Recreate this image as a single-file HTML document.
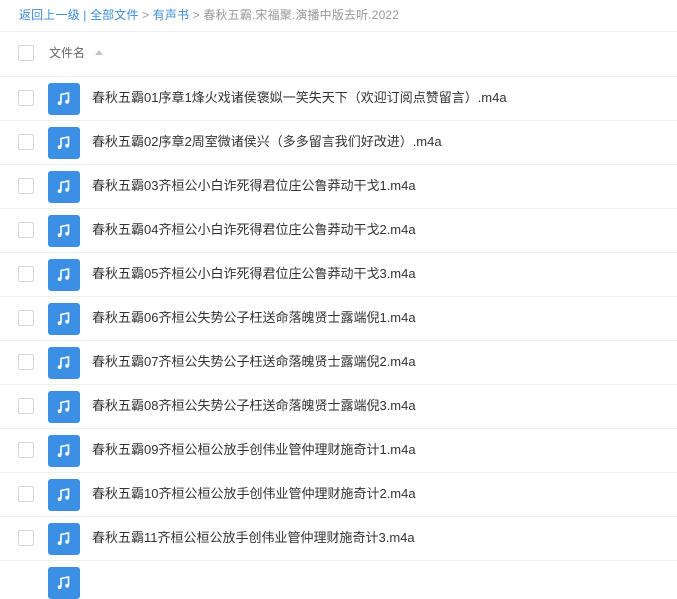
<!DOCTYPE html><html><head><meta charset="utf-8"><style>
body{margin:0;width:677px;height:578px;overflow:hidden;background:#fff;font-family:"Liberation Sans","Noto Sans CJK SC",sans-serif;}
.bc{position:absolute;left:19px;top:6px;font-size:12px;letter-spacing:0.15px;color:#999;line-height:18px;white-space:nowrap}
.bc a{color:#3b8cd6}
.hl{position:absolute;left:0;width:677px;height:1px;background:#eef0f4}
.cb{position:absolute;left:18px;width:14px;height:14px;border:1px solid #d6d6d6;border-radius:2px;background:#fff}
.ic{position:absolute;left:48px;width:32px;height:32px;background:#3b8fe5;border-radius:3px}
.ic svg{position:absolute;left:8px;top:8px}
.t{position:absolute;left:92px;font-size:13px;color:#333;line-height:18px;white-space:nowrap}
</style></head><body>
<div class="bc"><a>返回上一级</a> <span style="color:#3b8cd6">|</span> <a>全部文件</a> &gt; <a>有声书</a> &gt; 春秋五霸.宋福聚.演播中版去听.2022</div>
<div class="hl" style="top:31px"></div>
<div class="cb" style="top:45px"></div>
<div style="position:absolute;left:49px;top:45px;font-size:12px;color:#666;line-height:16px">文件名</div>
<div style="position:absolute;left:95px;top:50px;width:0;height:0;border-left:4px solid transparent;border-right:4px solid transparent;border-bottom:5px solid #c0c4cc"></div>
<div class="hl" style="top:76px"></div>
<div id="rows"></div>
<script>
var n=["春秋五霸01序章1烽火戏诸侯褒姒一笑失天下（欢迎订阅点赞留言）.m4a","春秋五霸02序章2周室微诸侯兴（多多留言我们好改进）.m4a","春秋五霸03齐桓公小白诈死得君位庄公鲁莽动干戈1.m4a","春秋五霸04齐桓公小白诈死得君位庄公鲁莽动干戈2.m4a","春秋五霸05齐桓公小白诈死得君位庄公鲁莽动干戈3.m4a","春秋五霸06齐桓公失势公子枉送命落魄贤士露端倪1.m4a","春秋五霸07齐桓公失势公子枉送命落魄贤士露端倪2.m4a","春秋五霸08齐桓公失势公子枉送命落魄贤士露端倪3.m4a","春秋五霸09齐桓公桓公放手创伟业管仲理财施奇计1.m4a","春秋五霸10齐桓公桓公放手创伟业管仲理财施奇计2.m4a","春秋五霸11齐桓公桓公放手创伟业管仲理财施奇计3.m4a",""];
var h="",svg='<svg width="16" height="16" viewBox="0 0 16 16"><path d="M5 12V3.5L12.5 2V10.5" stroke="#fff" stroke-width="1.6" fill="none"/><circle cx="3.6" cy="12.2" r="1.9" fill="#fff"/><circle cx="11.1" cy="10.8" r="1.9" fill="#fff"/></svg>';
for(var i=0;i<12;i++){var y=77+i*44;
h+='<div class="ic" style="top:'+(y+6)+'px">'+svg+'</div>';
if(n[i]){h+='<div class="cb" style="top:'+(y+13)+'px"></div><div class="t" style="top:'+(y+12)+'px">'+n[i]+'</div><div class="hl" style="top:'+(y+43)+'px"></div>';}}
document.getElementById("rows").innerHTML=h;
</script>
</body></html>
